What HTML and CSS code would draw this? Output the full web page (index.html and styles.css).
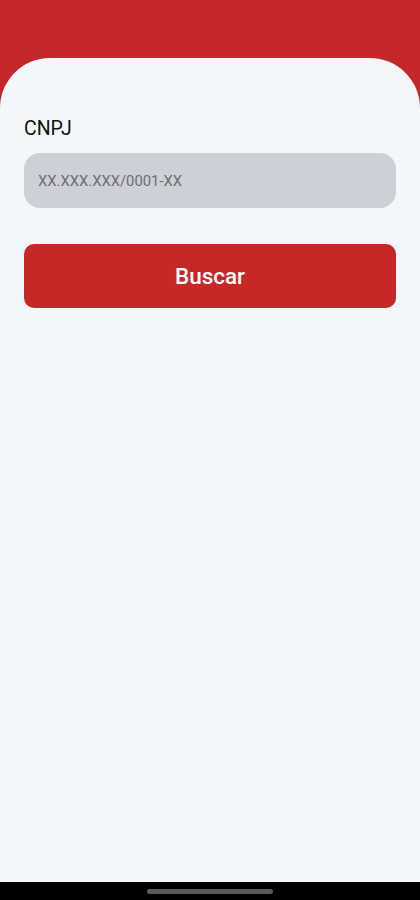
FILE: index.html
```html
<!DOCTYPE html>
<html lang="pt-BR">
<head>
  <meta charset="UTF-8">
  <title>Buscar CNPJ</title>
  <meta name="viewport" content="width=device-width,initial-scale=1">
  <link rel="stylesheet" href="styles.css">
</head>
<body>
  <div class="screen">
    <div class="topbar"></div>
    <div class="sheet">
      <label class="field-label" for="cnpj">CNPJ</label>
      <input class="field-input" id="cnpj" type="text" placeholder="XX.XXX.XXX/0001-XX">
      <button class="btn-search" type="button">Buscar</button>
    </div>
    <div class="navbar"><span class="handle"></span></div>
  </div>
</body>
</html>
```

FILE: styles.css
```css
* {
  box-sizing: border-box;
}
html, body {
  margin: 0;
  height: 100%;
}
body {
  background: #c4262a;
  font-family: Roboto, "Liberation Sans", sans-serif;
}
.screen {
  display: flex;
  flex-direction: column;
  height: 900px;
}
.topbar {
  height: 58px;
  flex: none;
}
.sheet {
  flex: 1;
  display: flex;
  flex-direction: column;
  background: #f4f7fa;
  border-radius: 50px 50px 0 0;
  padding: 59px 24px 0;
}
.field-label {
  font-size: 19.5px;
  line-height: 23px;
  color: #111;
  margin-bottom: 13px;
}
.field-input {
  height: 55px;
  border: none;
  border-radius: 16px;
  background: #cdd0d6;
  padding: 0 14px;
  font-family: inherit;
  font-size: 14.8px;
  color: #333;
  outline: none;
}
.field-input::placeholder {
  color: #6b6d72;
}
.btn-search {
  margin-top: 36px;
  height: 64px;
  border: none;
  border-radius: 10px;
  background: #c62828;
  color: #fff;
  font-family: inherit;
  font-size: 22.5px;
  font-weight: 500;
}
.navbar {
  height: 18px;
  flex: none;
  background: #000;
  display: flex;
  justify-content: center;
  align-items: center;
}
.handle {
  width: 126px;
  height: 5px;
  border-radius: 3px;
  background: #5a5a5a;
}
```
